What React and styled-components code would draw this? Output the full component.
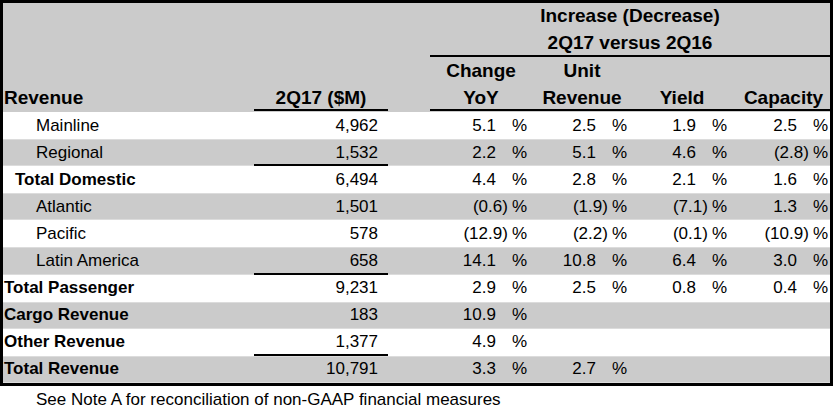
import React from "react";
import styled, { createGlobalStyle } from "styled-components";

const GlobalStyle = createGlobalStyle`
  html, body {
    margin: 0;
    padding: 0;
    background: #ffffff;
  }
  body {
    font-family: "Liberation Sans", Arial, sans-serif;
    color: #000;
  }
`;

const COLS = "251px 134px 44px 100px 100px 100px 1fr";
const GRAY = "#cbcbcb";

const rows = [
  { label: "Mainline", level: 2, value: "4,962", pct: ["5.1", "2.5", "1.9", "2.5"] },
  { label: "Regional", level: 2, value: "1,532", pct: ["2.2", "5.1", "4.6", "-2.8"], rule: true },
  { label: "Total Domestic", level: 1, value: "6,494", pct: ["4.4", "2.8", "2.1", "1.6"] },
  { label: "Atlantic", level: 2, value: "1,501", pct: ["-0.6", "-1.9", "-7.1", "1.3"] },
  { label: "Pacific", level: 2, value: "578", pct: ["-12.9", "-2.2", "-0.1", "-10.9"] },
  { label: "Latin America", level: 2, value: "658", pct: ["14.1", "10.8", "6.4", "3.0"], rule: true },
  { label: "Total Passenger", level: 0, value: "9,231", pct: ["2.9", "2.5", "0.8", "0.4"] },
  { label: "Cargo Revenue", level: 0, value: "183", pct: ["10.9"] },
  { label: "Other Revenue", level: 0, value: "1,377", pct: ["4.9"], rule: true },
  { label: "Total Revenue", level: 0, value: "10,791", pct: ["3.3", "2.7"] },
];

export default function App() {
  return (
    <>
      <GlobalStyle />
      <Page>
        <Frame>
          <Header>
            <HeadRow>
              <Span $from={4} $to={8}>Increase (Decrease)</Span>
            </HeadRow>
            <HeadRow>
              <Span $from={4} $to={8} $rule>2Q17 versus 2Q16</Span>
            </HeadRow>
            <HeadRow>
              <HeadCell $col={4}>Change</HeadCell>
              <HeadCell $col={5}>Unit</HeadCell>
            </HeadRow>
            <HeadRow $rule>
              <HeadLabel>Revenue</HeadLabel>
              <HeadCell $col={2} $underline>2Q17 ($M)</HeadCell>
              <HeadCell $col={4} $underline>YoY</HeadCell>
              <HeadCell $col={5} $underline>Revenue</HeadCell>
              <HeadCell $col={6} $underline>Yield</HeadCell>
              <HeadCell $col={7} $underline $last>Capacity</HeadCell>
            </HeadRow>
          </Header>
          {rows.map((r, i) => (
            <Row key={r.label} $shaded={i % 2 === 1}>
              <Label $level={r.level}>{r.label}</Label>
              <Amount $rule={r.rule}>{r.value}</Amount>
              <span />
              {[0, 1, 2, 3].map((k) => {
                const v = r.pct[k];
                if (v === undefined) return <span key={k} />;
                const neg = v.startsWith("-");
                return (
                  <Pct key={k} $last={k === 3}>
                    <Num $neg={neg}>{neg ? `(${v.slice(1)})` : v}</Num>
                    <span>%</span>
                  </Pct>
                );
              })}
            </Row>
          ))}
        </Frame>
        <Note>See Note A for reconciliation of non-GAAP financial measures</Note>
      </Page>
    </>
  );
}

const Page = styled.div`
  width: 835px;
  height: 413px;
  overflow: hidden;
`;

const Frame = styled.div`
  width: 833px;
  box-sizing: border-box;
  border: 3px solid #000;
  background: #fff;
`;

const Header = styled.div`
  background: ${GRAY};
  padding-bottom: 1px;
`;

const HeadRow = styled.div`
  display: grid;
  grid-template-columns: ${COLS};
  height: 27px;
  align-items: end;
  font-weight: bold;
  font-size: 19px;
`;

const Span = styled.div`
  grid-column: ${(p) => p.$from} / ${(p) => p.$to};
  text-align: center;
  height: 27px;
  line-height: 26px;
  box-sizing: border-box;
  margin-left: -2px;
  border-bottom: ${(p) => (p.$rule ? "2px solid #000" : "none")};
`;

const HeadCell = styled.div`
  grid-column: ${(p) => p.$col};
  text-align: center;
  height: 27px;
  line-height: 27px;
  box-sizing: border-box;
  padding-left: ${(p) => (p.$last ? "5px" : "0")};
  border-bottom: ${(p) => (p.$underline ? "2px solid #000" : "none")};
  ${(p) => (p.$col === 4 ? "margin-left: -2px;" : "")}
`;

const HeadLabel = styled.div`
  grid-column: 1;
  padding-left: 1px;
  line-height: 27px;
`;

const Row = styled.div`
  display: grid;
  grid-template-columns: ${COLS};
  height: 27.1px;
  align-items: stretch;
  font-size: 17px;
  background: ${(p) => (p.$shaded ? GRAY : "#fff")};
  box-shadow: ${(p) => (p.$shaded ? "inset 0 1px #dcdcdc, inset 0 -1px #dcdcdc" : "none")};
`;

const Label = styled.div`
  display: flex;
  align-items: center;
  font-weight: ${(p) => (p.$level < 2 ? "bold" : "normal")};
  padding-left: ${(p) => (p.$level === 2 ? "33px" : p.$level === 1 ? "12px" : "1px")};
`;

const Amount = styled.div`
  display: flex;
  align-items: center;
  justify-content: flex-end;
  padding-right: 10px;
  box-sizing: border-box;
  border-bottom: ${(p) => (p.$rule ? "2px solid #000" : "none")};
  padding-top: ${(p) => (p.$rule ? "2px" : "0")};
`;

const Pct = styled.div`
  display: flex;
  align-items: center;
  justify-content: flex-end;
  padding-right: ${(p) => (p.$last ? "2px" : "5px")};
`;

const Num = styled.span`
  margin-right: ${(p) => (p.$neg ? "4px" : "16px")};
`;

const Note = styled.div`
  font-size: 17px;
  padding-left: 36px;
  padding-top: 4px;
`;
